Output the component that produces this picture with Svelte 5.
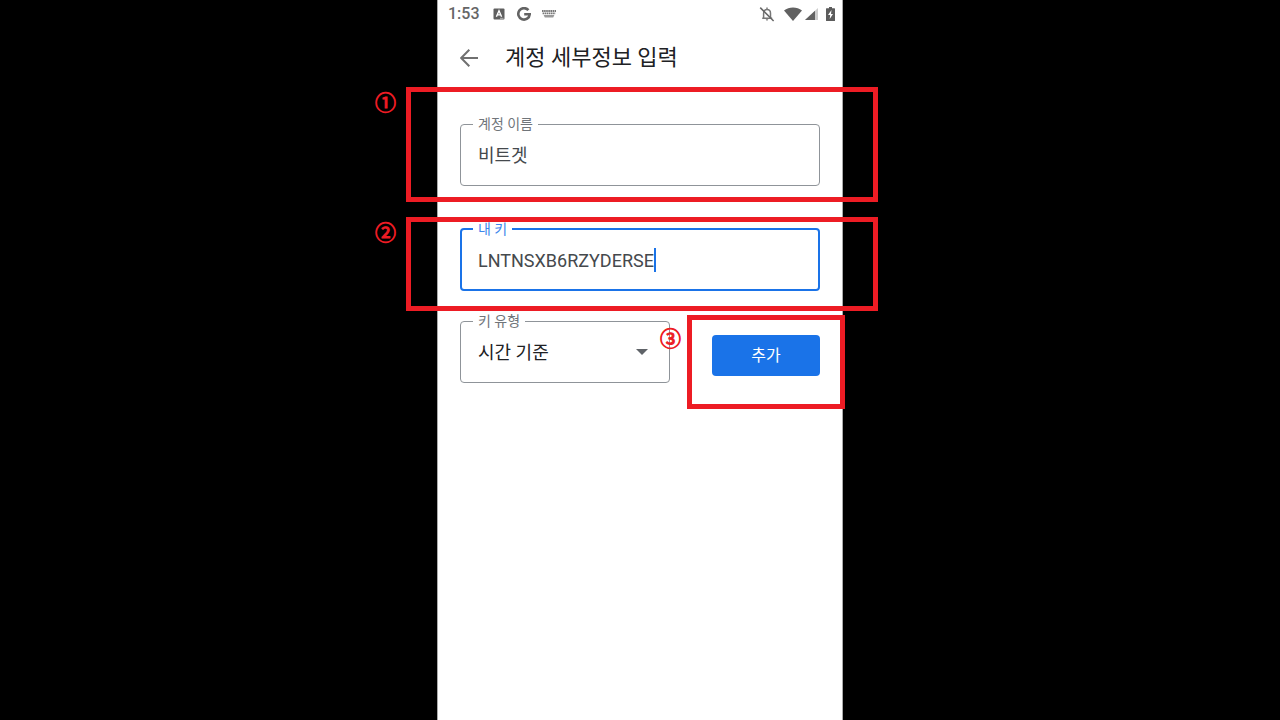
<script lang="ts">
  let accountName = $state("비트겟");
  let key = $state("LNTNSXB6RZYDERSE");
  let keyType = $state("time");
</script>

<div class="stage">
  <main class="phone">
    <div class="status-bar">
      <span class="clock">1:53</span>
      <svg class="icon-app" viewBox="0 0 12 12" width="12" height="12" aria-hidden="true">
        <rect x="0.5" y="0.5" width="11" height="11" rx="1" fill="#5f5f5f" />
        <path d="M3.4 8.7 6 2.8l2.6 5.9M4.3 6.9h3.4" fill="none" stroke="#fff" stroke-width="1.4" />
        <path d="M7 10.3h3.5" stroke="#ccc" stroke-width="0.8" />
      </svg>
      <svg class="icon-google" viewBox="0 0 14 14" width="14" height="14" aria-hidden="true">
        <path d="M11.4 3.2A5.7 5.7 0 1 0 12.7 7.3H7.2" fill="none" stroke="#646464" stroke-width="2.6" />
      </svg>
      <svg class="icon-keyboard" viewBox="0 0 14 8" width="14" height="8" aria-hidden="true">
        <path d="M0 1h14M0.6 3.4h12.8" fill="none" stroke="#777" stroke-width="1.8" stroke-dasharray="1.6 0.5" />
        <path d="M1.6 5h10.8l-1.2 2.6H2.8z" fill="#999" />
      </svg>
      <span class="spacer"></span>
      <svg class="icon-bell" viewBox="0 0 16 16" width="16" height="16" aria-hidden="true">
        <path d="M3.2 12.2h10M4.6 12V7.2C4.6 4.8 6 3.4 8 3.4s3.5 1.4 3.5 3.8V12M8 3.4V1.6" fill="none" stroke="#777" stroke-width="1.5" />
        <path d="M6.6 13.3h2.8L8 14.9z" fill="#777" />
        <path d="M1.2 1.6 14.6 15" stroke="#666" stroke-width="1.5" />
      </svg>
      <svg class="icon-wifi" viewBox="0 0 18 14" width="18" height="14" aria-hidden="true">
        <path d="M0 3.6C5 -0.4 13 -0.4 18 3.6L9 14z" fill="#616161" />
      </svg>
      <svg class="icon-signal" viewBox="0 0 13 12" width="13" height="12" aria-hidden="true">
        <path d="M13 0v12H0z" fill="#ccc" />
        <path d="M10 2.8V12H0z" fill="#616161" />
      </svg>
      <svg class="icon-battery" viewBox="0 0 9 14" width="9" height="14" aria-hidden="true">
        <path d="M3 0h3v1.2h2.4q.6 0 .6.6v11.6q0 .6-.6.6H.6q-.6 0-.6-.6V1.8q0-.6.6-.6H3z" fill="#5c5c5c" />
        <path d="M5.5 3 2 8h2.2L3.7 12 7 7H5z" fill="#fff" />
      </svg>
    </div>

    <header class="app-bar">
      <button class="back" type="button" aria-label="뒤로">
        <svg viewBox="0 0 18 18" width="18" height="18" aria-hidden="true">
          <path d="M18 9H1.5M9.3 0.8 1.2 9l8.1 8.2" fill="none" stroke="#707070" stroke-width="2" />
        </svg>
      </button>
      <h1>계정 세부정보 입력</h1>
    </header>

    <section class="step step-name">
      <fieldset class="field">
        <legend><label for="account-name">계정 이름</label></legend>
        <input id="account-name" type="text" bind:value={accountName} />
      </fieldset>
      <div class="callout"><span class="number">①</span></div>
    </section>

    <section class="step step-key">
      <fieldset class="field active">
        <legend><label for="key">내 키</label></legend>
        <div class="key-row">
          <input id="key" type="text" size="16" bind:value={key} />
          <span class="caret"></span>
        </div>
      </fieldset>
      <div class="callout"><span class="number">②</span></div>
    </section>

    <section class="last-row">
      <fieldset class="field">
        <legend><label for="key-type">키 유형</label></legend>
        <div class="select-row">
          <select id="key-type" bind:value={keyType}>
            <option value="time">시간 기준</option>
          </select>
          <svg viewBox="0 0 12 6" width="12" height="6" aria-hidden="true">
            <path d="M0 0h12L6 6z" fill="#5f6368" />
          </svg>
        </div>
      </fieldset>
      <div class="step step-add">
        <button class="add" type="button">추가</button>
        <div class="callout"><span class="number">③</span></div>
      </div>
    </section>
  </main>
</div>

<style>
  :global(body) {
    margin: 0;
    background: #000;
  }

  .stage {
    display: flex;
    justify-content: center;
    min-height: 100vh;
    background: #000;
    font-family: Roboto, "Noto Sans CJK KR", sans-serif;
  }

  .phone {
    width: 100%;
    max-width: 406px;
    background: #fff;
    box-shadow: inset 1px 0 #aaa, inset -1px 0 #aaa;
  }

  .status-bar {
    display: flex;
    align-items: center;
    height: 28px;
    padding: 0 8px 0 11px;
    color: #666;
  }

  .clock {
    font-size: 16px;
    font-weight: 500;
    line-height: 28px;
  }

  .icon-app {
    margin-left: 13px;
  }

  .icon-google {
    margin-left: 12px;
  }

  .icon-keyboard {
    margin-left: 11px;
  }

  .spacer {
    flex: 1;
  }

  .icon-wifi {
    margin-left: 9px;
  }

  .icon-signal {
    margin-left: 3px;
  }

  .icon-battery {
    margin-left: 8px;
  }

  .app-bar {
    display: flex;
    align-items: center;
    height: 59px;
    padding: 0 23px;
  }

  .back {
    display: flex;
    padding: 0;
    border: none;
    background: none;
    cursor: pointer;
  }

  h1 {
    margin: 0 0 0 27px;
    color: #202124;
    font-size: 22px;
    font-weight: 400;
    line-height: 32px;
  }

  .step {
    position: relative;
  }

  .step-name {
    padding: 29px 23px 16px;
  }

  .step-key {
    margin-top: 15px;
    padding: 4px 23px 20px;
  }

  .last-row {
    display: flex;
    align-items: flex-start;
    gap: 17px;
    margin-top: 2px;
    padding-left: 23px;
  }

  .last-row .field {
    flex: 1;
  }

  .step-add {
    margin-top: 2px;
    padding: 20px 23px 33px 25px;
  }

  .field {
    box-sizing: border-box;
    min-width: 0;
    height: 70px;
    margin: 0;
    padding: 0 17px 0 12px;
    border: 1px solid #8f9499;
    border-radius: 4px;
  }

  .field.active {
    padding: 0 16px 0 11px;
    border: 2px solid #1a73e8;
  }

  legend {
    padding: 0 5px;
    color: #70757a;
    font-size: 14px;
    line-height: 16px;
  }

  .active legend {
    color: #3b86ec;
  }

  input,
  select {
    box-sizing: border-box;
    width: 100%;
    height: 46px;
    padding: 0;
    border: none;
    outline: none;
    background: none;
    color: #45494d;
    font-family: inherit;
    font-size: 18px;
  }

  .field > input {
    height: 44px;
    padding-left: 5px;
  }

  .key-row,
  .select-row {
    display: flex;
    align-items: center;
    padding-left: 5px;
  }

  .key-row input {
    width: auto;
    field-sizing: content;
  }

  .caret {
    width: 2px;
    height: 24px;
    background: #1a73e8;
  }

  select {
    flex: 1;
    appearance: none;
    color: #202124;
  }

  .select-row svg {
    margin-right: 4px;
  }

  .add {
    display: block;
    width: 108px;
    height: 41px;
    padding: 0 0 4px;
    border: none;
    border-radius: 4px;
    background: #1a73e8;
    color: #fff;
    font-family: inherit;
    font-size: 16px;
    cursor: pointer;
  }

  .callout {
    position: absolute;
    inset: 0 -35px 0 -31px;
    border: 5px solid #ed1c24;
    pointer-events: none;
  }

  .step-add .callout {
    inset: 0 -2px 0 0;
  }

  .number {
    position: absolute;
    top: -2px;
    left: -36px;
    color: #ed1c24;
    font-family: "Noto Sans CJK KR", sans-serif;
    font-size: 21px;
    font-weight: 400;
    line-height: 22px;
    -webkit-text-stroke: 1px #ed1c24;
  }

  .step-add .number {
    top: 6px;
    left: -32px;
  }
</style>
